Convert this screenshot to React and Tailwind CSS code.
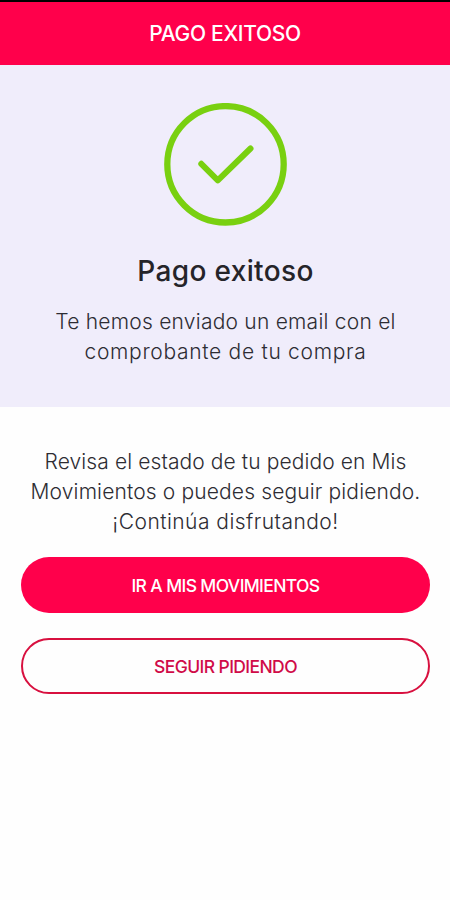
function SuccessIcon() {
  return (
    <svg className="block w-[123px] h-[123px] ml-px" viewBox="0 0 123 123" fill="none" stroke="#79d010">
      <circle cx="61.5" cy="61.3" r="58.2" strokeWidth="6.3" />
      <path d="M37.3 60.8L53.8 77.4L86.5 45.5" strokeWidth="6" strokeLinecap="round" strokeLinejoin="round" />
    </svg>
  )
}

export default function App() {
  return (
    <div className="flex flex-col h-[900px] w-full bg-[#fefefe] border-t-2 border-black font-['Inter','Open_Sans',sans-serif] text-center text-[#2d2c33] overflow-hidden">
      {/* Header */}
      <header className="flex items-center justify-center h-[63px] bg-[#ff004b] shrink-0">
        <h1 className="text-[21px] leading-[30px] font-medium tracking-[-0.3px] text-white whitespace-nowrap">PAGO EXITOSO</h1>
      </header>

      {/* Confirmation */}
      <section className="flex flex-col items-center h-[342px] pt-[38px] bg-[#f0edfb] shrink-0">
        <SuccessIcon />
        <h2 className="mt-[25px] pl-px text-[28px] leading-10 font-medium tracking-[0.35px] text-[#252429] whitespace-nowrap">Pago exitoso</h2>
        <div className="mt-4 pl-px text-[21px] leading-[30px] font-light whitespace-nowrap">
          <p className="tracking-[0.23px]">Te hemos enviado un email con el</p>
          <p className="tracking-[0.7px]">comprobante de tu compra</p>
        </div>
      </section>

      {/* Next steps */}
      <main className="pl-[21px] pr-5 pt-10">
        <div className="text-[21px] leading-[30px] font-light whitespace-nowrap">
          <p className="tracking-[0.1px]">Revisa el estado de tu pedido en Mis</p>
          <p className="tracking-[0.14px]">Movimientos o puedes seguir pidiendo.</p>
          <p className="tracking-[0.46px]">¡Continúa disfrutando!</p>
        </div>
        <div className="flex flex-col gap-[25px] mt-5 text-[17.5px] leading-6 font-medium whitespace-nowrap">
          <button className="h-14 pt-px rounded-full bg-[#ff004b] text-white tracking-[-0.63px]">IR A MIS MOVIMIENTOS</button>
          <button className="h-14 pt-px rounded-full border-2 border-[#d8103f] text-[#d00b48] tracking-[-0.6px]">SEGUIR PIDIENDO</button>
        </div>
      </main>
    </div>
  )
}
